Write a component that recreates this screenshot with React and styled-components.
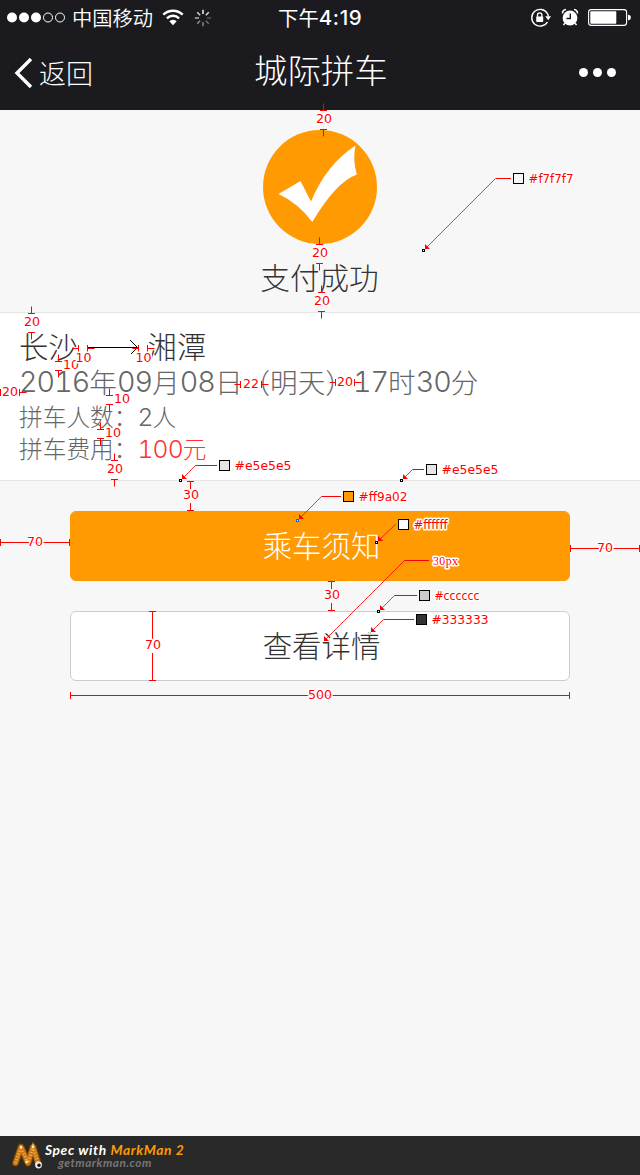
import React from 'react';
import styled, { createGlobalStyle } from 'styled-components';

const GlobalStyle = createGlobalStyle`
  * { box-sizing: border-box; }
  body { margin: 0; background: #f7f7f7; }
`;

const Screen = styled.div`
  position: relative;
  width: 640px;
  height: 1175px;
  display: flex;
  flex-direction: column;
  overflow: hidden;
  background: #f7f7f7;
  font-family: 'Noto Sans CJK SC', sans-serif;
  font-weight: 300;
  white-space: nowrap;
`;

const Header = styled.header`
  height: 110px;
  background: #1b1b1f;
  color: #fff;
`;

const StatusBar = styled.div`
  display: grid;
  grid-template-columns: 1fr 84px 1fr;
  align-items: center;
  height: 35px;
  padding: 0 9px 0 7px;
  font-size: 20px;
  font-weight: 400;
`;

const StatusGroup = styled.div`
  display: flex;
  align-items: center;
  justify-content: ${(p) => (p.$end ? 'flex-end' : 'flex-start')};
  line-height: 34px;
`;

const Carrier = styled.span`
  height: 34px;
  margin: 0 9px 0 7px;
  font-size: 20.3px;
  line-height: 32px;
  font-weight: 350;
`;

const Clock = styled.div`
  display: flex;
  height: 34px;
  padding-left: 1px;
  line-height: 33px;
  font-size: 20.4px;
`;

const ClockDigits = styled.span`
  font-family: Inter, sans-serif;
  font-weight: 500;
  font-size: 20.5px;
  letter-spacing: 0.6px;
`;

const NavBar = styled.nav`
  display: grid;
  grid-template-columns: 1fr 132px 1fr;
  align-items: center;
  height: 75px;
  padding: 0 24px 0 14px;
`;

const BackLink = styled.div`
  display: flex;
  align-items: center;
  gap: 6px;
  font-size: 27px;
  line-height: 73px;
  height: 73px;
`;

const Title = styled.h1`
  height: 75px;
  margin: 0;
  padding-left: 5px;
  font-size: 33.4px;
  font-weight: 300;
  line-height: 67px;
`;

const MoreDots = styled.div`
  display: flex;
  justify-content: flex-end;
  gap: 5px;
`;

const Dot = styled.span`
  width: 9px;
  height: 9px;
  border-radius: 50%;
  background: #fff;
`;

const Result = styled.section`
  display: flex;
  flex-direction: column;
  align-items: center;
  height: 202px;
  padding-top: 20px;
`;

const ResultText = styled.p`
  margin: 13px 1px 0 0;
  font-size: 29.6px;
  line-height: 40px;
  color: #333;
`;

const TripCard = styled.section`
  height: 169px;
  padding: 12px 20px 0 19px;
  border: solid #e5e5e5;
  border-width: 1px 0;
  background: #fff;
`;

const Route = styled.div`
  display: flex;
  align-items: center;
  gap: 9.5px;
  height: 39px;
  font-size: 29.3px;
  line-height: 36px;
  color: #333;
`;

const DateRow = styled.div`
  display: flex;
  height: 35px;
  line-height: 34px;
  font-size: 27.6px;
  color: #666;
`;

const Digits = styled.span`
  padding-top: 1px;
  font-family: Inter, sans-serif;
  font-size: 1.04em;
  font-weight: 300;
  font-variant-numeric: tabular-nums;
  letter-spacing: -0.034em;
`;

const Detail = styled.div`
  display: flex;
  height: 32px;
  font-size: 23.7px;
  line-height: 35px;
  color: #666;
`;

const Price = styled.span`
  color: #ff3333;
`;

const Actions = styled.section`
  flex: 1;
  display: flex;
  flex-direction: column;
  gap: 30px;
  padding: 30px 70px 0;
`;

const Button = styled.button`
  height: 70px;
  padding: 0 0 5px 3px;
  border: 1px solid ${(p) => (p.$primary ? '#ff9a02' : '#cccccc')};
  border-radius: 6px;
  background: ${(p) => (p.$primary ? '#ff9a02' : '#ffffff')};
  color: ${(p) => (p.$primary ? '#ffffff' : '#333333')};
  font: 300 29.4px 'Noto Sans CJK SC', sans-serif;
`;

const Footer = styled.footer`
  display: flex;
  gap: 2px;
  height: 39px;
  padding: 6px 11px 0;
  background: #292929;
  font-family: Lato, sans-serif;
  font-style: italic;
  font-weight: 700;
`;

const Credit = styled.div`
  color: #fff;
  font-size: 13.8px;
  line-height: 16px;
  letter-spacing: 0.6px;
`;

const Brand = styled.span`
  color: #ff9a02;
`;

const Site = styled.div`
  padding-left: 13px;
  color: #777;
  font-size: 11.8px;
  line-height: 9px;
  letter-spacing: 0.5px;
`;

const SpecLayer = styled.svg`
  position: absolute;
  inset: 0;
  pointer-events: none;
`;

const SpecText = styled.text`
  font-family: ${(p) => (p.$serif ? "'Liberation Serif', serif" : "'DejaVu Sans', sans-serif")};
  font-size: ${(p) => (p.$serif ? 12 : 12.6)}px;
  font-weight: 400;
  fill: #f00;
  stroke: #fff;
  stroke-width: 3px;
  stroke-linejoin: round;
  paint-order: stroke;
`;

const vertical = [
  { x: 323.5, a: 110.5, b: 129.5, t: '20', tx: 324, ty: 123 },
  { x: 319.5, a: 244.5, b: 263.5, t: '20', tx: 320, ty: 257 },
  { x: 321.5, a: 292.5, b: 311.5, t: '20', tx: 322, ty: 305 },
  { x: 31.5, a: 313.5, b: 332.5, t: '20', tx: 32, ty: 326 },
  { x: 58.5, a: 361.5, b: 370.5, t: '10', tx: 71, ty: 369 },
  { x: 109.5, a: 395.5, b: 404.5, t: '10', tx: 122, ty: 403 },
  { x: 100.5, a: 429.5, b: 438.5, t: '10', tx: 113, ty: 437 },
  { x: 114.5, a: 460.5, b: 479.5, t: '20', tx: 115, ty: 473 },
  { x: 190.5, a: 481.5, b: 510.5, t: '30', tx: 191, ty: 499, inside: true },
  { x: 331.5, a: 581.5, b: 610.5, t: '30', tx: 332, ty: 599, inside: true },
  { x: 152.5, a: 611.5, b: 680.5, t: '70', tx: 153, ty: 649, inside: true },
];

const horizontal = [
  { y: 348.5, a: 78.5, b: 87.5, t: '10', tx: 83.5, ty: 362 },
  { y: 348.5, a: 138.5, b: 147.5, t: '10', tx: 143.5, ty: 362 },
  { y: 392.5, a: 0.5, b: 19.5, t: '20', tx: 10, ty: 396 },
  { y: 384.5, a: 240.5, b: 261.5, t: '22', tx: 251, ty: 388 },
  { y: 382.5, a: 335.5, b: 354.5, t: '20', tx: 345, ty: 386 },
  { y: 542.5, a: 0.5, b: 69.5, t: '70', tx: 35, ty: 546, inside: true },
  { y: 548.5, a: 570.5, b: 639.5, t: '70', tx: 605, ty: 552, inside: true },
  { y: 695.5, a: 70.5, b: 569.5, t: '500', tx: 320, ty: 699, inside: true },
];

const callouts = [
  { x: 513, y: 173, bend: 495.5, tip: [425, 249], dot: [423.5, 250.5], c: '#f7f7f7', w: 45 },
  { x: 219, y: 460, bend: 195.5, tip: [182, 479], dot: [180.5, 480.5], c: '#e5e5e5', w: 57 },
  { x: 426, y: 464, bend: 412.5, tip: [403, 479], dot: [401.5, 480.5], c: '#e5e5e5', w: 57 },
  { x: 343, y: 491, bend: 321.5, tip: [299, 519], dot: [297.5, 520.5], c: '#ff9a02', w: 49, ring: '#0066ff' },
  { x: 398, y: 519, bend: 395.5, tip: [378, 541], dot: [376.5, 542.5], c: '#ffffff', w: 34 },
  { x: 419, y: 590, bend: 394.5, tip: [380, 610], dot: [378.5, 611.5], c: '#cccccc', w: 45 },
  { x: 416, y: 614, bend: 383.5, tip: [371, 632], dot: [369.5, 633.5], c: '#333333', w: 57, ring: '#cccccc' },
];

function DimensionLabel({ t, tx, ty }) {
  const w = t.length * 8;
  return <SpecText x={tx - w / 2} y={ty} textLength={w}>{t}</SpecText>;
}

function Vertical({ x, a, b, t, tx, ty, inside }) {
  const stems = inside
    ? `M${x} ${a}V${ty - 10}M${x} ${ty + 4}V${b}`
    : `M${x} ${a - 7}V${a}M${x} ${b}V${b + 7}`;
  return (
    <g>
      <path d={`M${x - 3.5} ${a}h7M${x - 3.5} ${b}h7${stems}`} stroke="#f00" />
      <DimensionLabel t={t} tx={tx} ty={ty} />
    </g>
  );
}

function Horizontal({ y, a, b, t, tx, ty, inside }) {
  const stems = inside ? `M${a} ${y}H${b}` : `M${a - 6} ${y}H${a}M${b} ${y}h7`;
  return (
    <g>
      <path d={`M${a} ${y - 3.5}v7M${b} ${y - 3.5}v7${stems}`} stroke="#f00" />
      <DimensionLabel t={t} tx={tx} ty={ty} />
    </g>
  );
}

function Leader({ from, bend, y, tip }) {
  const [tx, ty] = tip;
  return (
    <g>
      <path d={`M${from} ${y}H${bend}`} stroke="#f00" />
      <path d={`M${bend} ${y}L${tx + 2} ${ty - 2}`} stroke="#f00" strokeWidth="0.8" />
      <path d={`M${tx} ${ty}v-5l5 5z`} fill="#f00" />
    </g>
  );
}

function Callout({ x, y, bend, tip, dot, c, w, ring = '#000' }) {
  return (
    <g>
      <Leader from={x - 2} bend={bend} y={y + 5.5} tip={tip} />
      <rect x={dot[0] - 1} y={dot[1] - 1} width="2" height="2" fill="#fff" stroke={ring} />
      <rect x={x + 0.5} y={y + 0.5} width="10" height="10" fill={c} stroke="#000" />
      <SpecText x={x + 15.5} y={y + 10} textLength={w} lengthAdjust="spacingAndGlyphs">{c}</SpecText>
    </g>
  );
}

function Signal() {
  return (
    <svg width="58" height="12" viewBox="0 0 58 12" fill="#fff">
      <circle cx="5" cy="5.5" r="5" /><circle cx="17" cy="5.5" r="5" /><circle cx="29" cy="5.5" r="5" />
      <g fill="none" stroke="#fff"><circle cx="41" cy="5.5" r="4.5" /><circle cx="53" cy="5.5" r="4.5" /></g>
    </svg>
  );
}

function Wifi() {
  return (
    <svg width="22" height="17" viewBox="0 0 22 17" fill="none" stroke="#fff" strokeWidth="2.4">
      <path d="M1.3 5.7a14 14 0 0 1 19.4 0M4.9 9.3a8.7 8.7 0 0 1 12.2 0" />
      <path d="M7.3 12.3a5.3 5.3 0 0 1 7.4 0L11 16.2z" fill="#fff" stroke="none" />
    </svg>
  );
}

const SpinnerIcon = styled.svg`
  margin-left: 10px;
`;

function Spinner() {
  const tones = [0.95, 0.85, 0.25, 0.35, 0.45, 0.5, 0.65, 0.8];
  return (
    <SpinnerIcon width="18" height="18" viewBox="-9 -9 18 18">
      {tones.map((o, i) => (
        <path key={i} d="M0-4V-8.2" stroke="#fff" strokeWidth="1.5" opacity={o} transform={`rotate(${i * 45})`} />
      ))}
    </SpinnerIcon>
  );
}

function StatusIcons() {
  return (
    <svg width="101" height="20" viewBox="0 0.5 101 20" fill="none" stroke="#fff">
      <path d="M17.4 6A8.4 8.4 0 1 0 17.4 14.5" strokeWidth="1.4" />
      <path d="M17.2 5.5Q18.3 7.5 18.3 9" strokeWidth="1.4" />
      <path d="M15.3 8.8h5.8l-2.9 4z" fill="#fff" stroke="none" />
      <rect x="6.2" y="9" width="7" height="5.4" rx=".6" fill="#fff" stroke="none" />
      <path d="M7.5 9.5V7.5a2.2 2.2 0 0 1 4.4 0v2" strokeWidth="1.3" />
      <circle cx="40" cy="10.5" r="7.4" fill="#fff" stroke="none" />
      <path d="M32.5 6Q32.5 2.3 36 2M47.5 6Q47.5 2.3 44 2" strokeWidth="1.6" />
      <path d="M34.8 15.8l-1.3 1.8M45.2 15.8l1.3 1.8" strokeWidth="1.5" />
      <path d="M40.3 6v5h-3.8" stroke="#1b1b1f" strokeWidth="1.4" />
      <rect x="58.6" y="2.1" width="38" height="15.8" rx="2.6" strokeWidth="1.1" />
      <rect x="60.3" y="3.8" width="26" height="12.4" rx="1" fill="#fff" stroke="none" />
      <path d="M98 7.2q2.8 0 2.8 2.8T98 12.8z" fill="#fff" stroke="none" />
    </svg>
  );
}

function SuccessMark() {
  return (
    <svg width="114" height="114" viewBox="263 130 114 114">
      <circle cx="320" cy="187" r="57" fill="#ff9a02" />
      <path d="M278.5 194L300.5 181L311 201.5Q326 165 355.5 145.5Q352.5 159 356.8 174.5Q336 182 312.3 222Q298 203 278.5 194Z" fill="#fff" />
    </svg>
  );
}

function MarkManLogo() {
  return (
    <svg width="32" height="28" viewBox="0 0 32 28" fill="none" strokeLinecap="round">
      <path d="M4.5 21L10 5L17 21L22 5L27.5 22" stroke="#754008" strokeWidth="7" strokeLinejoin="round" />
      <path d="M4.5 21L10 5L17 21L22 5L27 21" stroke="#c87817" strokeWidth="5" strokeLinejoin="round" />
      <path d="M4.5 21L10 5L17 21L22 5L27 21" stroke="#f0b24d" strokeWidth="3" strokeDasharray="1 2" strokeLinecap="butt" />
      <circle cx="10" cy="5" r="1.2" fill="#fff1b0" /><circle cx="22" cy="5" r="1.2" fill="#fff1b0" />
      <circle cx="15.5" cy="20" r="1.3" fill="#fff1b0" />
      <circle cx="27.5" cy="23" r="3.4" fill="#eee" /><circle cx="28" cy="23.2" r="1.7" fill="#111" />
    </svg>
  );
}

export default function App() {
  return (
    <Screen>
      <GlobalStyle />
      <Header>
        <StatusBar>
          <StatusGroup>
            <Signal />
            <Carrier>中国移动</Carrier>
            <Wifi />
            <Spinner />
          </StatusGroup>
          <Clock>下午<ClockDigits>4:19</ClockDigits></Clock>
          <StatusGroup $end><StatusIcons /></StatusGroup>
        </StatusBar>
        <NavBar>
          <BackLink>
            <svg width="19" height="32" viewBox="0 0 19 32" fill="none" stroke="#fff" strokeWidth="3.4">
              <path d="M17 2L3 16L17 30" />
            </svg>
            返回
          </BackLink>
          <Title>城际拼车</Title>
          <MoreDots><Dot /><Dot /><Dot /></MoreDots>
        </NavBar>
      </Header>
      <Result>
        <SuccessMark />
        <ResultText>支付成功</ResultText>
      </Result>
      <TripCard>
        <Route>
          长沙
          <svg width="51" height="18" viewBox="0 -2 51 18" fill="none" stroke="#000">
            <path d="M0 9.5H50" /><path d="M43 2L50.5 9.5L43 17" />
          </svg>
          湘潭
        </Route>
        <DateRow>
          <Digits>2016</Digits>年<Digits>09</Digits>月<Digits>08</Digits>日（明天）<Digits>17</Digits>时<Digits>30</Digits>分
        </DateRow>
        <Detail>拼车人数：<Digits>2</Digits>人</Detail>
        <Detail>拼车费用：<Price><Digits>100</Digits>元</Price></Detail>
      </TripCard>
      <Actions>
        <Button $primary>乘车须知</Button>
        <Button>查看详情</Button>
      </Actions>
      <Footer>
        <MarkManLogo />
        <div>
          <Credit>Spec with <Brand>MarkMan 2</Brand></Credit>
          <Site>getmarkman.com</Site>
        </div>
      </Footer>
      <SpecLayer width="640" height="1175" viewBox="0 0 640 1175" fill="none">
        {vertical.map((m, i) => <Vertical key={i} {...m} />)}
        {horizontal.map((m, i) => <Horizontal key={i} {...m} />)}
        {callouts.map((m, i) => <Callout key={i} {...m} />)}
        <Leader from={429} bend={404.5} y={560.5} tip={[324, 641]} />
        <SpecText $serif x="433" y="565" textLength="25">30px</SpecText>
      </SpecLayer>
    </Screen>
  );
}
